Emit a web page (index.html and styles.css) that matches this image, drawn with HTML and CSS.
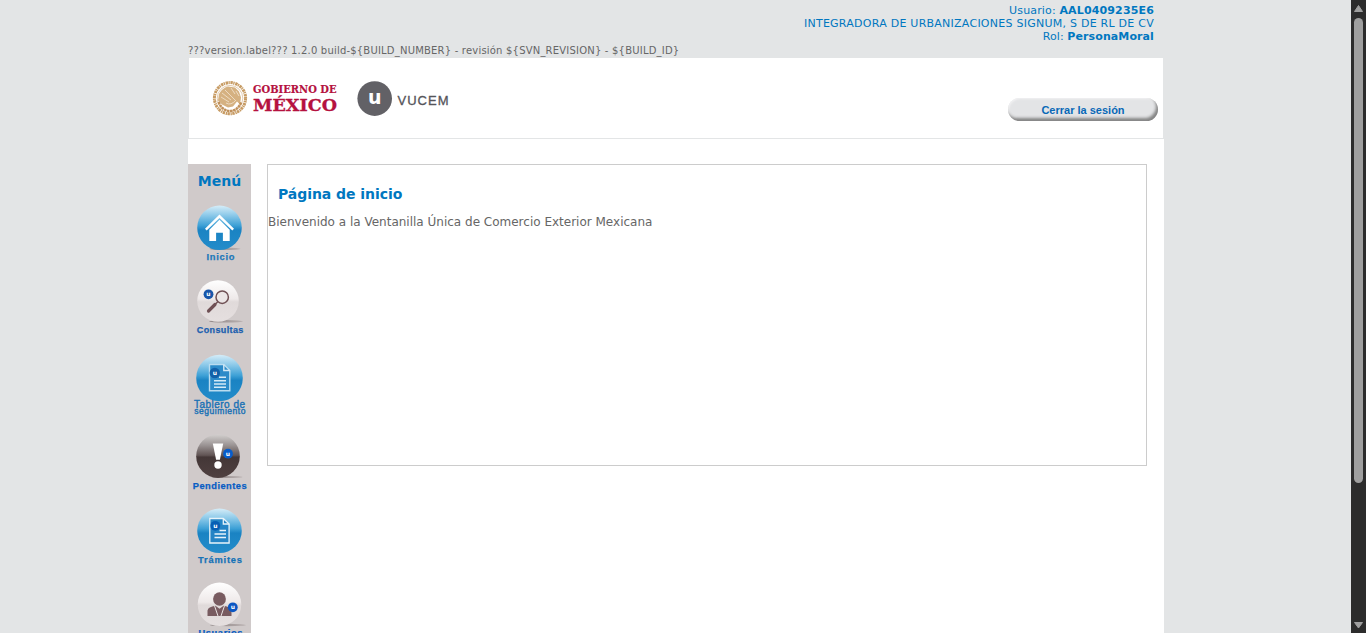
FILE: index.html
```html
<!DOCTYPE html>
<html lang="es">
<head>
<meta charset="utf-8">
<title>Ventanilla Única</title>
<link rel="stylesheet" href="styles.css">
</head>
<body>
<div class="viewport">
<div class="page">
  <div class="top">
    <div class="user">
      <div class="t-user">Usuario: <b>AAL0409235E6</b></div>
      <div class="t-company">INTEGRADORA DE URBANIZACIONES SIGNUM, S DE RL DE CV</div>
      <div class="t-role">Rol: <b>PersonaMoral</b></div>
    </div>
    <div class="version">???version.label??? 1.2.0 build-${BUILD_NUMBER} - revisión ${SVN_REVISION} - ${BUILD_ID}</div>
  </div>
  <header class="header">
    <svg class="logos" width="250" height="50" viewBox="205 75 250 50">
      <g fill="none" stroke="#c79b63">
        <circle cx="230" cy="98.200" r="15.600" stroke-width="3" stroke-dasharray="2.400 .5 1.300 .7"/>
        <circle cx="230" cy="98.200" r="12.800" stroke-width=".5"/>
      </g>
      <path d="M219 94q3-6 9-7.500l7 1 4 4 2 6-1 7-3-3-4 5-5 1-6-3-4-4z" fill="#d5b181"/>
      <path d="M221 97l8 5M222 93l9 7M225 90l10 10M231 88l4 6M226 103q5 3 10-3M236 91l3 5" stroke="#f3e5d2" stroke-width=".8" fill="none"/>
      <path d="M218.500 102q4 9 11.500 9t11.500-9" stroke="#c0905a" stroke-width="2.500" stroke-dasharray="2.500 .6" fill="none"/>
      <g class="slab" fill="#b5123f" stroke="#b5123f">
        <text x="253" y="92.800" font-size="10.200" stroke-width=".15" textLength="83.500" lengthAdjust="spacingAndGlyphs">GOBIERNO DE</text>
        <text x="253" y="110.500" font-size="17.300" stroke-width=".3" textLength="84" lengthAdjust="spacingAndGlyphs">MÉXICO</text>
      </g>
      <circle cx="374.700" cy="98.600" r="17.300" fill="#626166"/>
      <text class="round" x="374.700" y="104" font-size="19" text-anchor="middle" fill="#fff">u</text>
      <text class="arial" x="397.500" y="105" font-size="13" fill="#55545a" stroke="#55545a" stroke-width=".3" textLength="51" lengthAdjust="spacing">VUCEM</text>
    </svg>
    <button class="logout">Cerrar la sesión</button>
  </header>
  <div class="body">
    <nav class="menu">
      <h2>Menú</h2>
      <svg width="63" height="74" viewBox="188 196 63 74">
        <defs>
          <linearGradient id="blue" x2="0" y2="1"><stop stop-color="#d6edf8"/><stop offset=".22" stop-color="#8cc9e9"/><stop offset=".45" stop-color="#3da0d6"/><stop offset=".55" stop-color="#1a83c3"/><stop offset="1" stop-color="#238cca"/></linearGradient>
          <linearGradient id="light" x2="0" y2="1"><stop stop-color="#fff"/><stop offset=".45" stop-color="#eee9e9"/><stop offset=".52" stop-color="#e0dada"/><stop offset="1" stop-color="#e5dfdf"/></linearGradient>
          <linearGradient id="dark" x2="0" y2="1"><stop stop-color="#d2cfce"/><stop offset=".25" stop-color="#9a9393"/><stop offset=".48" stop-color="#615454"/><stop offset=".52" stop-color="#443737"/><stop offset="1" stop-color="#4f4040"/></linearGradient>
          <linearGradient id="shade"><stop stop-color="#8f8585"/><stop offset="1" stop-color="#b8b0b0"/></linearGradient>
        </defs>
        <ellipse cx="225" cy="248.800" rx="15.500" ry="1.200" fill="url(#shade)"/>
        <circle cx="219.500" cy="227.800" r="22.300" fill="url(#blue)"/>
        <path d="M205 228.800L219.500 214.500 234 228.800l-1.700 1.700-12.800-12.500-12.800 12.500z" fill="#fff"/>
        <path d="M209.300 229.700l10.200-10 10.200 10v11.300h-6.800v-8.200h-6.800v8.200h-6.800z" fill="#fff"/>
        <text class="label" x="206.500" y="260" font-size="9.300" fill="#1c78ba" stroke="#1c78ba" textLength="28" lengthAdjust="spacing">Inicio</text>
      </svg>
      <svg width="63" height="75" viewBox="188 270 63 75">
        <ellipse cx="226" cy="321.300" rx="17" ry="1.200" fill="url(#shade)"/>
        <circle cx="218" cy="301" r="20.800" fill="url(#light)"/>
        <path d="M208.500 311l6.500-6.500" stroke="#6f5054" stroke-width="3.200" stroke-linecap="round"/>
        <path d="M215 304.500l3-3" stroke="#6f5054" stroke-width="1.500"/>
        <circle cx="222.200" cy="297.200" r="6.200" fill="#ebe6e6" stroke="#6f5054" stroke-width="1.500"/>
        <circle cx="208.500" cy="294.300" r="4.900" fill="#1856a9"/>
        <text class="mini" x="208.500" y="296.300" fill="#fff">u</text>
        <text class="label" x="196.800" y="332.500" font-size="9" fill="#1b5eaf" stroke="#1b5eaf" textLength="46.500" lengthAdjust="spacing">Consultas</text>
      </svg>
      <svg width="63" height="80" viewBox="188 345 63 80">
        <circle cx="219.500" cy="378" r="23.300" fill="url(#blue)"/>
        <path d="M209.500 364.500h14.300l6 6v20.300h-20.300z" fill="#2c8bc9" stroke="#b9dcf0" stroke-width="1.400"/>
        <path d="M223.800 364.500v6h6M219 377.300h7M214 380.700h12M214 384h12M214 387.300h12" fill="none" stroke="#d5eaf6" stroke-width="1.400"/>
        <circle cx="214.800" cy="373" r="5.200" fill="#1260a8"/>
        <text class="mini" x="214.800" y="375" fill="#fff">u</text>
        <text class="arial" x="194" y="407.500" font-size="10" fill="#1c72b5" stroke="#1c72b5" stroke-width=".4" textLength="51" lengthAdjust="spacing">Tablero de</text>
        <text class="arial" x="194.300" y="414" font-size="8.500" fill="#1c72b5" stroke="#1c72b5" stroke-width=".4" textLength="51.200" lengthAdjust="spacing">seguimiento</text>
      </svg>
      <svg width="63" height="75" viewBox="188 425 63 75">
        <ellipse cx="227" cy="477" rx="15.500" ry="1.100" fill="url(#shade)"/>
        <circle cx="218" cy="456.200" r="21.800" fill="url(#dark)"/>
        <path d="M212.800 443.500h10.400l-3.300 16.300h-3.800z" fill="#fff"/>
        <circle cx="218" cy="465" r="3.700" fill="#fff"/>
        <circle cx="228" cy="453.700" r="4.900" fill="#075dcb"/>
        <text class="mini" x="228" y="455.700" fill="#fff">u</text>
        <text class="label" x="192.700" y="488.500" font-size="9.300" fill="#075dc4" stroke="#075dc4" textLength="54" lengthAdjust="spacing">Pendientes</text>
      </svg>
      <svg width="63" height="75" viewBox="188 500 63 75">
        <circle cx="219.500" cy="530.800" r="22.300" fill="url(#blue)"/>
        <path d="M209.800 518.500h13.500l5.800 5.500v19h-19.300z" fill="#2484c5" stroke="#e7f3fa" stroke-width="1.300"/>
        <path d="M223.300 518.500v5.500h5.800M219.500 530.500h6.500M214.500 534h11.500M214.500 537.500h11.500" fill="none" stroke="#e7f3fa" stroke-width="1.300"/>
        <circle cx="215.300" cy="525.800" r="4.900" fill="#075fb4"/>
        <text class="mini" x="215.300" y="527.800" fill="#fff">u</text>
        <text class="label" x="198" y="562.500" font-size="9.300" fill="#1572b7" stroke="#1572b7" textLength="44" lengthAdjust="spacing">Trámites</text>
      </svg>
      <svg width="63" height="75" viewBox="188 575 63 75">
        <ellipse cx="228" cy="625" rx="18" ry="1.200" fill="url(#shade)"/>
        <circle cx="219.500" cy="604.300" r="21.800" fill="url(#light)"/>
        <path d="M207.500 616v-5.500q.5-3.500 8-4.700l4 3 4-3q7.500 1.200 8 4.700v5.500z" fill="#785b60"/>
        <ellipse cx="219.500" cy="599" rx="6.400" ry="6.700" fill="#785b60"/>
        <path d="M214.500 605.800l3.500 10.200M224.500 605.800l-3.500 10.200" stroke="#e9e3e3" stroke-width="1"/>
        <circle cx="232.800" cy="607.300" r="4.900" fill="#0b56c3"/>
        <text class="mini" x="232.800" y="609.300" fill="#fff">u</text>
        <text class="label" x="198.500" y="636.300" font-size="9.300" fill="#075dc4" stroke="#075dc4" textLength="44" lengthAdjust="spacing">Usuarios</text>
      </svg>
    </nav>
    <main class="content">
      <h1>Página de inicio</h1>
      <p>Bienvenido a la Ventanilla Única de Comercio Exterior Mexicana</p>
    </main>
  </div>
</div>
<div class="scrollbar">
  <svg width="15" height="18" viewBox="0 0 15 18"><path d="M7.500 5.500L11.500 11.500h-8z" fill="#9f9f9f" stroke="#9f9f9f" stroke-linejoin="round"/></svg>
  <div class="thumb"></div>
  <svg class="down" width="15" height="15" viewBox="0 0 15 15"><path d="M7.500 10L3.500 4.500h8z" fill="#9f9f9f" stroke="#9f9f9f" stroke-linejoin="round"/></svg>
</div>
</div>
</body>
</html>
```
FILE: styles.css
```css
* { box-sizing: border-box; }
body { margin: 0; background: #e3e5e6; font-family: Verdana, "DejaVu Sans", sans-serif; color: #666; }
.viewport { display: flex; height: 633px; overflow: hidden; }
.page { width: 976px; margin-left: 188px; display: flex; flex-direction: column; height: 633px; }
.top { height: 58px; flex: none; white-space: nowrap; }
.user { height: 43px; padding: 4px 10px 0 0; text-align: right; font-size: 11px; line-height: 13px; color: #0077c0; }
.t-user { letter-spacing: .15px; }
.t-company { letter-spacing: .25px; }
.t-role { letter-spacing: .1px; }
.version { font-size: 10px; line-height: 15px; letter-spacing: .2px; }
.header { flex: none; height: 81px; margin: 0 1px; background: #fff; display: flex; justify-content: space-between; padding: 17px 5px 0 16px; box-shadow: 0 -1px 0 #e3e5e6 inset; }
.logos { flex: none; }
.logout { width: 150px; height: 23px; margin-top: 23px; padding: 1px 0 0; border: 0; border-radius: 12px; background: #e3e4e6; box-shadow: inset -2px -3px 3px #858585, inset 1px 1px 2px #f1f1f2; font: bold 11px "Liberation Sans", Arial, sans-serif; color: #0868b7; }
.body { flex: 1; min-height: 0; background: #fff; padding-top: 25px; display: flex; align-items: flex-start; overflow: hidden; }
.menu { width: 63px; background: #d0caca; display: flex; flex-direction: column; flex: none; }
.menu h2 { margin: 0; height: 32px; line-height: 34px; text-align: center; font-size: 14px; color: #0077c0; }
.menu svg { display: block; flex: none; }
.content { width: 880px; height: 302px; margin-left: 16px; border: 1px solid #ccc; }
.content h1 { margin: 20px 0 0 10px; font-size: 14px; line-height: 18px; letter-spacing: -.05px; color: #0077c0; }
.content p { margin: 11px 0 0; font-size: 12px; line-height: 16px; white-space: nowrap; }
.slab { font-family: "DejaVu Serif", serif; font-weight: bold; }
.round { font-family: "DejaVu Sans", sans-serif; font-weight: bold; }
.arial { font-family: "Liberation Sans", Arial, sans-serif; }
.label { font-family: "Liberation Sans", Arial, sans-serif; font-weight: bold; stroke-width: .25px; }
.mini { font: bold 6px "DejaVu Sans", sans-serif; text-anchor: middle; }
.scrollbar { width: 15px; margin-left: auto; background: #2c2c2c; display: flex; flex-direction: column; align-items: center; }
.scrollbar svg { display: block; flex: none; }
.thumb { width: 9px; height: 465px; border-radius: 5px; background: #9f9f9f; }
.down { margin-top: auto; }
```
